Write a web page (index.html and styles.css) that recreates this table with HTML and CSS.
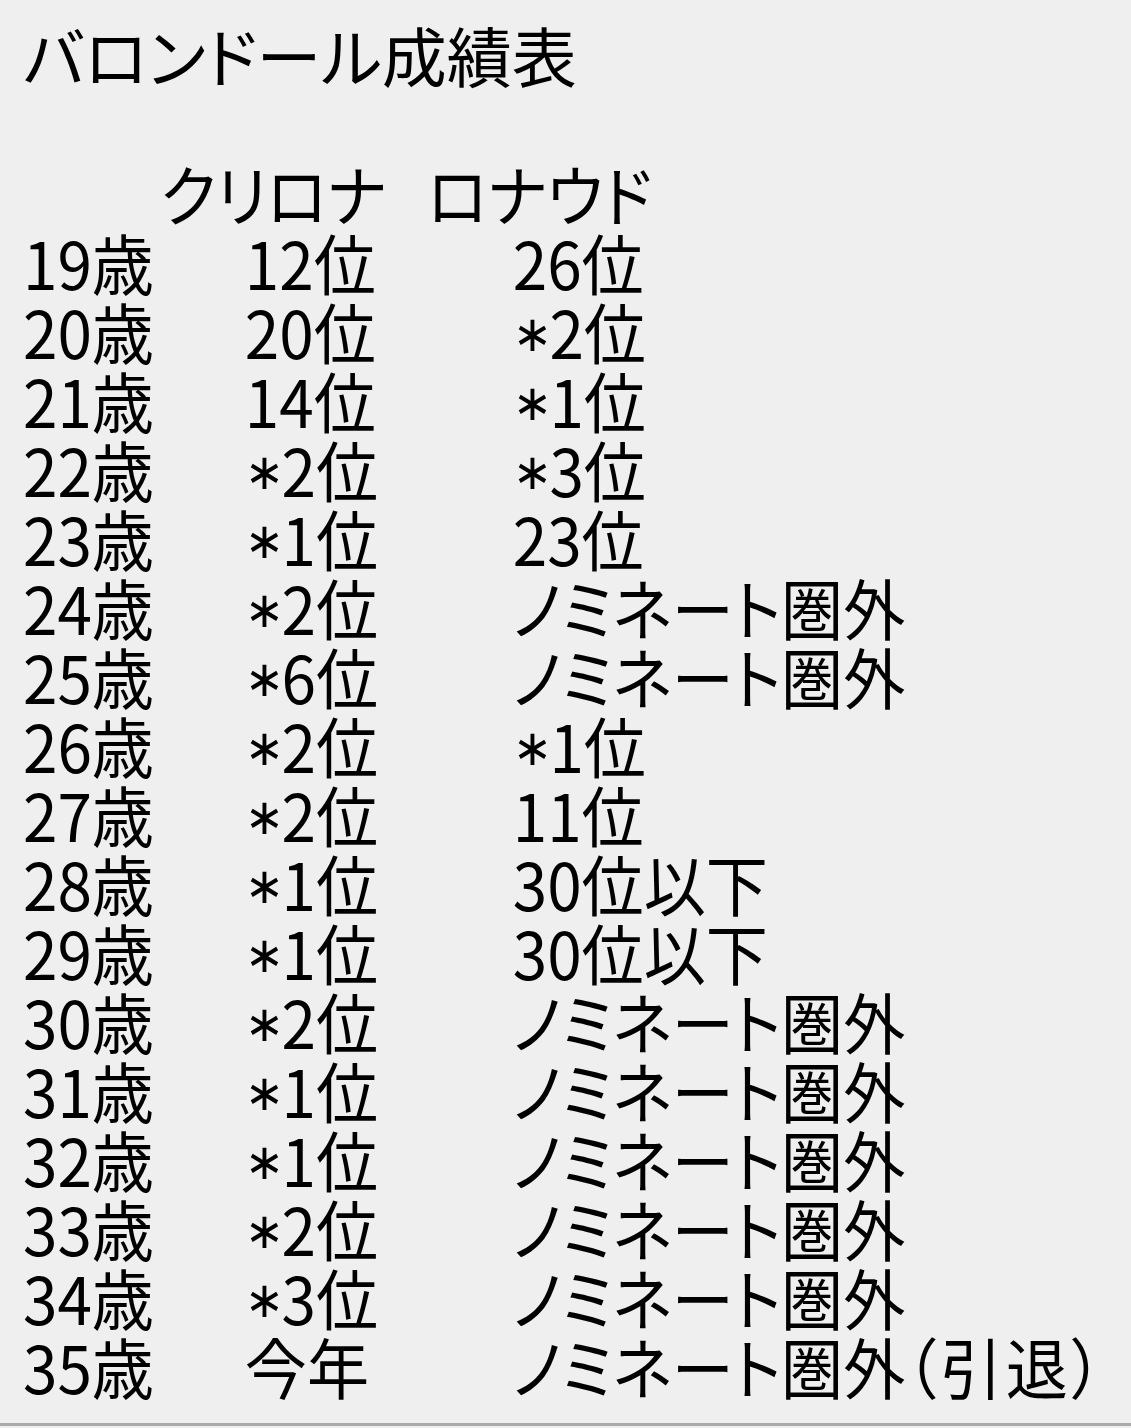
FILE: index.html
```html
<!DOCTYPE html>
<html lang="ja">
<head>
<meta charset="utf-8">
<title>バロンドール成績表</title>
<link rel="stylesheet" href="styles.css">
</head>
<body>
<div class="page">
  <div class="sheet">
    <h1 class="title">バロンドール成績表</h1>
    <div class="blank"></div>
    <div class="table">
      <div class="row head"><span></span><span>クリロナ</span><span>ロナウド</span></div>
      <div class="row"><span>19歳</span><span>12位</span><span>26位</span></div>
      <div class="row"><span>20歳</span><span>20位</span><span><i class="ast">∗</i>2位</span></div>
      <div class="row"><span>21歳</span><span>14位</span><span><i class="ast">∗</i>1位</span></div>
      <div class="row"><span>22歳</span><span><i class="ast">∗</i>2位</span><span><i class="ast">∗</i>3位</span></div>
      <div class="row"><span>23歳</span><span><i class="ast">∗</i>1位</span><span>23位</span></div>
      <div class="row"><span>24歳</span><span><i class="ast">∗</i>2位</span><span>ノミネート圏外</span></div>
      <div class="row"><span>25歳</span><span><i class="ast">∗</i>6位</span><span>ノミネート圏外</span></div>
      <div class="row"><span>26歳</span><span><i class="ast">∗</i>2位</span><span><i class="ast">∗</i>1位</span></div>
      <div class="row"><span>27歳</span><span><i class="ast">∗</i>2位</span><span>11位</span></div>
      <div class="row"><span>28歳</span><span><i class="ast">∗</i>1位</span><span>30位以下</span></div>
      <div class="row"><span>29歳</span><span><i class="ast">∗</i>1位</span><span>30位以下</span></div>
      <div class="row"><span>30歳</span><span><i class="ast">∗</i>2位</span><span>ノミネート圏外</span></div>
      <div class="row"><span>31歳</span><span><i class="ast">∗</i>1位</span><span>ノミネート圏外</span></div>
      <div class="row"><span>32歳</span><span><i class="ast">∗</i>1位</span><span>ノミネート圏外</span></div>
      <div class="row"><span>33歳</span><span><i class="ast">∗</i>2位</span><span>ノミネート圏外</span></div>
      <div class="row"><span>34歳</span><span><i class="ast">∗</i>3位</span><span>ノミネート圏外</span></div>
      <div class="row"><span>35歳</span><span>今年</span><span>ノミネート圏外<span class="paren">（引退）</span></span></div>
    </div>
  </div>
</div>
</body>
</html>
```
FILE: styles.css
```css
html, body {
  margin: 0;
  padding: 0;
  background: #efefef;
}
body {
  width: 1131px;
  height: 1428px;
  overflow: hidden;
  font-family: "Noto Sans CJK JP", "Noto Sans", sans-serif;
  color: #000;
}
.page {
  height: 1423px;
  border-bottom: 3px solid #aaaaaa;
  overflow: hidden;
}
.sheet {
  padding: 20px 0 0 23px;
  font-size: 66px;
  line-height: 69px;
  white-space: nowrap;
  font-feature-settings: "palt";
}
.title {
  margin: 0;
  font-size: 65px;
  font-weight: normal;
  line-height: 69px;
  height: 69px;
}
.blank {
  height: 69px;
}
.table {
  transform: scaleX(0.94);
  transform-origin: 0 0;
}
.row {
  display: grid;
  grid-template-columns: 236px 285px auto;
  height: 69px;
  overflow: visible;
}
.row.head {
  grid-template-columns: 146px 284px auto;
}
.ast {
  display: inline-block;
  font-style: normal;
  font-family: "DejaVu Sans", sans-serif;
  font-size: 50px;
  width: 39px;
  height: 40px;
  line-height: 40px;
  vertical-align: 8px;
  text-align: left;
}
.paren {
  letter-spacing: 4px;
}
```
